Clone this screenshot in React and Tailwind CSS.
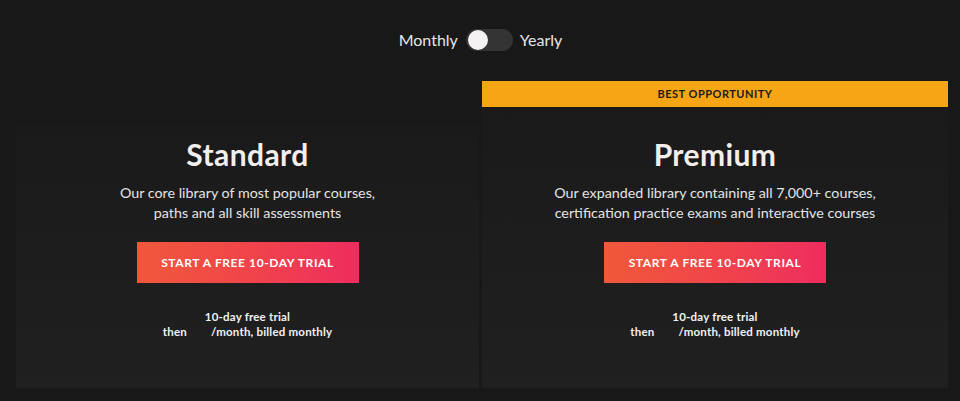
export default function App() {
  const font = { fontFamily: 'Lato, "Noto Sans", sans-serif' };
  const Trial = () => (
    <div className="mt-[26px] text-[11.5px] font-bold leading-[15px] text-[#f2f2f2] text-center tracking-[0.2px]">
      <div>10-day free trial</div>
      <div className="flex justify-center">
        <span>then</span>
        <span className="w-[24px] shrink-0" />
        <span>/month, billed monthly</span>
      </div>
    </div>
  );
  const Button = () => (
    <button className="mt-[19px] w-[222px] h-[41px] bg-gradient-to-r from-[#f0583a] via-[#f0444a] to-[#ee2c5e] text-white text-[12px] font-bold tracking-[0.6px] uppercase">
      Start a free 10-day trial
    </button>
  );
  return (
    <div className="w-[960px] h-[401px] bg-[#181818] pt-[29px] overflow-hidden" style={font}>
      <div className="flex items-center justify-center h-[22px]">
        <span className="text-[16px] text-[#e6e6e6] mr-[8px] ml-[1px]">Monthly</span>
        <div className="w-[47px] h-[22px] rounded-full bg-[#343434] flex items-center px-[2px]">
          <div className="w-[20px] h-[20px] rounded-full bg-[#f4f2f2]" />
        </div>
        <span className="text-[16px] text-[#e6e6e6] ml-[7px]">Yearly</span>
      </div>
      <div className="flex items-end pl-[16px] mt-[30px] gap-[3px]">
        <div className="w-[463px] h-[264px] bg-gradient-to-b from-[#1a1a1a] to-[#202020] flex flex-col items-center pt-[12px]">
          <h2 className="text-[30px] font-bold text-[#f2eeee] leading-[36px] tracking-[0.4px]">Standard</h2>
          <p className="mt-[11px] text-[14.3px] leading-[20px] text-[#e4e4e4] text-center">
            Our core library of most popular courses,<br />paths and all skill assessments
          </p>
          <Button />
          <Trial />
        </div>
        <div className="w-[466px] flex flex-col">
          <div className="h-[26px] bg-[#f6a515] flex items-center justify-center text-[11px] font-bold tracking-[0.5px] text-[#1b1b1b] shadow-[0_2px_0_#121212]">
            BEST OPPORTUNITY
          </div>
          <div className="h-[281px] bg-gradient-to-b from-[#1a1a1a] to-[#202020] flex flex-col items-center pt-[29px]">
            <h2 className="text-[30px] font-bold text-[#f2eeee] leading-[36px] tracking-[0.4px]">Premium</h2>
            <p className="mt-[11px] text-[14.3px] leading-[20px] text-[#e4e4e4] text-center">
              Our expanded library containing all 7,000+ courses,<br />certification practice exams and interactive courses
            </p>
            <Button />
            <Trial />
          </div>
        </div>
      </div>
    </div>
  );
}
